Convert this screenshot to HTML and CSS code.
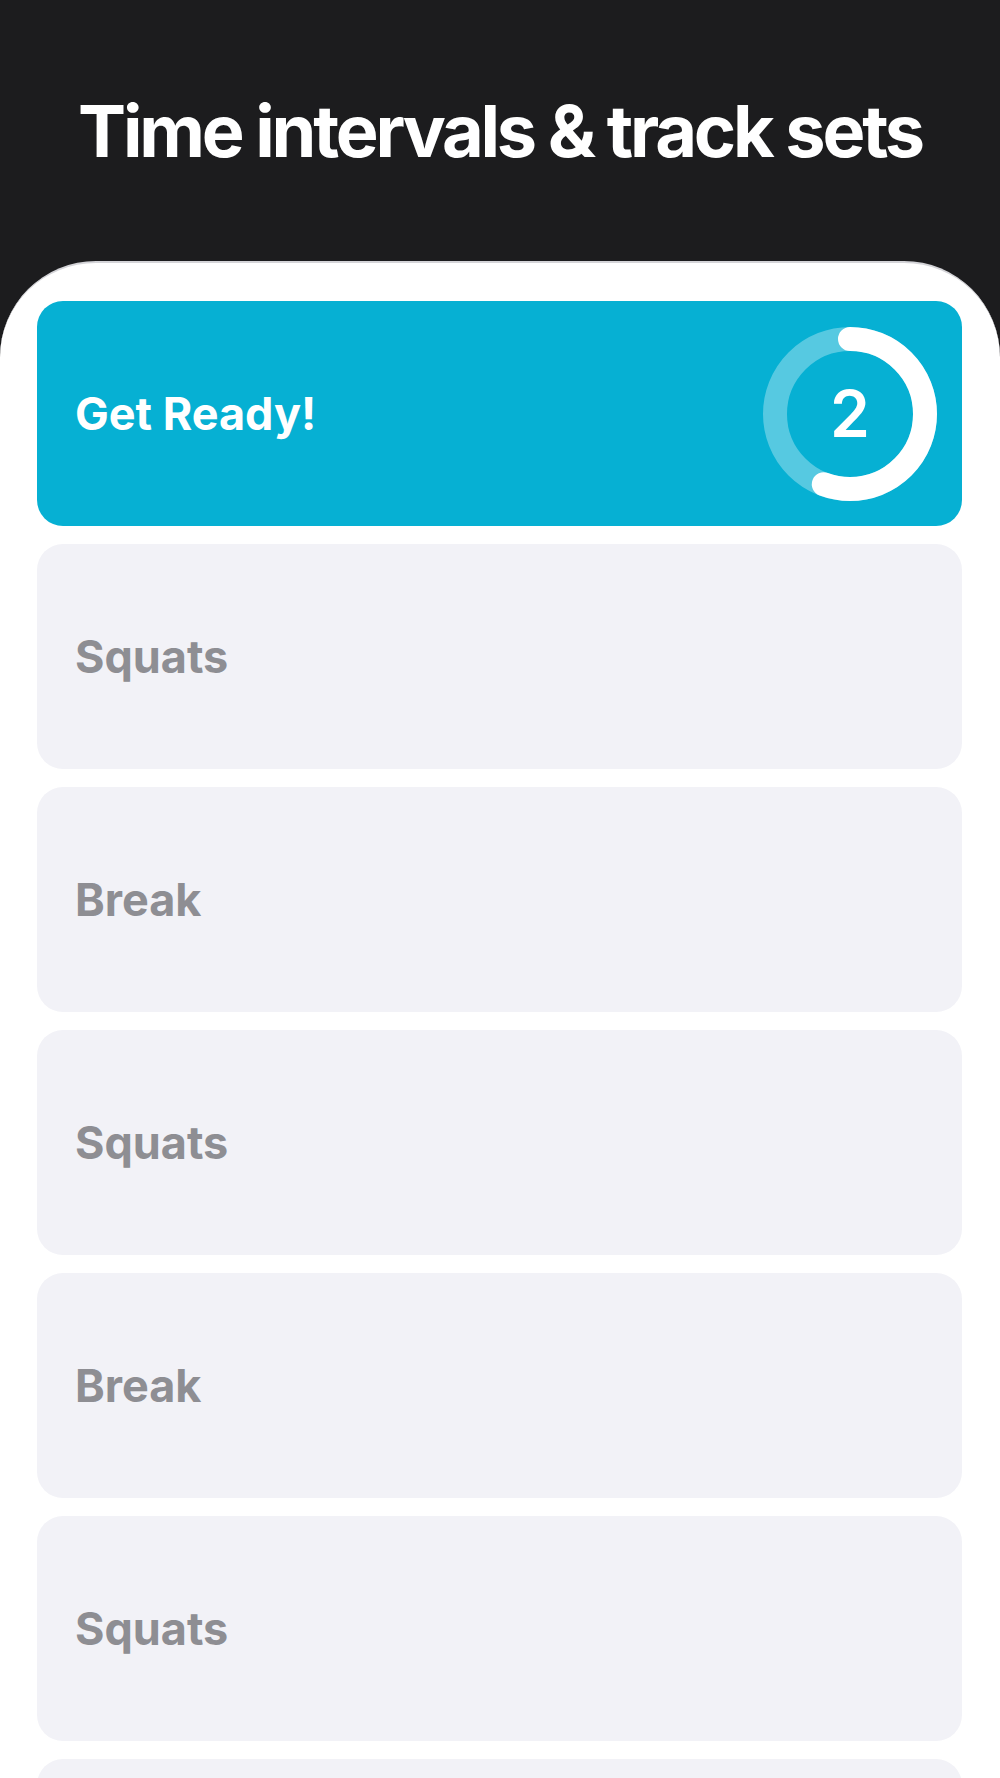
FILE: index.html
```html
<!DOCTYPE html>
<html lang="en">
  <head>
    <meta charset="UTF-8" />
    <meta name="viewport" content="width=device-width, initial-scale=1.0" />
    <title>Interval Timer</title>
    <link rel="stylesheet" href="styles.css">
  </head>
  <body>
    <header class="top">
      <h1>Time intervals &amp; track sets</h1>
    </header>

    <main class="sheet">
      <div class="step active">
        <span class="label">Get Ready!</span>
        <div class="ring">
          <svg viewBox="0 0 174 174" width="174" height="174">
            <circle class="track" cx="87" cy="87" r="75" />
            <circle class="progress" cx="87" cy="87" r="75" transform="rotate(-90 87 87)" />
          </svg>
          <span class="count">2</span>
        </div>
      </div>
      <div class="step"><span class="label">Squats</span></div>
      <div class="step"><span class="label">Break</span></div>
      <div class="step"><span class="label">Squats</span></div>
      <div class="step"><span class="label">Break</span></div>
      <div class="step"><span class="label">Squats</span></div>
      <div class="step"></div>
    </main>
  </body>
</html>
```

FILE: styles.css
```css
body {
  margin: 0;
  background: #1c1c1e;
  font-family: "Inter", "Liberation Sans", sans-serif;
}
.top {
  height: 261px;
  box-sizing: border-box;
  padding-top: 87px;
  text-align: center;
}
.top h1 {
  margin: 0;
  font-size: 72px;
  line-height: 88px;
  font-weight: 700;
  letter-spacing: -3.2px;
  color: #fff;
}
.sheet {
  background: #fff;
  border-top: 2px solid #d4d4d8;
  border-radius: 96px 96px 0 0;
  padding: 38px 38px 0 37px;
  display: flex;
  flex-direction: column;
  gap: 18px;
}
.step {
  height: 225px;
  border-radius: 26px;
  background: #f2f2f7;
  display: flex;
  align-items: center;
  justify-content: space-between;
  padding: 0 25px 0 38px;
  flex-shrink: 0;
}
.label {
  font-size: 45px;
  font-weight: 700;
  color: #8e8e93;
}
.step.active {
  background: #06b0d3;
}
.step.active .label {
  color: #fff;
}
.ring {
  position: relative;
  width: 174px;
  height: 174px;
}
.ring svg {
  display: block;
}
.track {
  fill: none;
  stroke: rgba(255, 255, 255, 0.32);
  stroke-width: 24;
}
.progress {
  fill: none;
  stroke: #fff;
  stroke-width: 24;
  stroke-linecap: round;
  stroke-dasharray: 262 472;
}
.count {
  position: absolute;
  inset: 0;
  display: flex;
  align-items: center;
  justify-content: center;
  font-size: 64px;
  font-weight: 600;
  color: #fff;
}
```
